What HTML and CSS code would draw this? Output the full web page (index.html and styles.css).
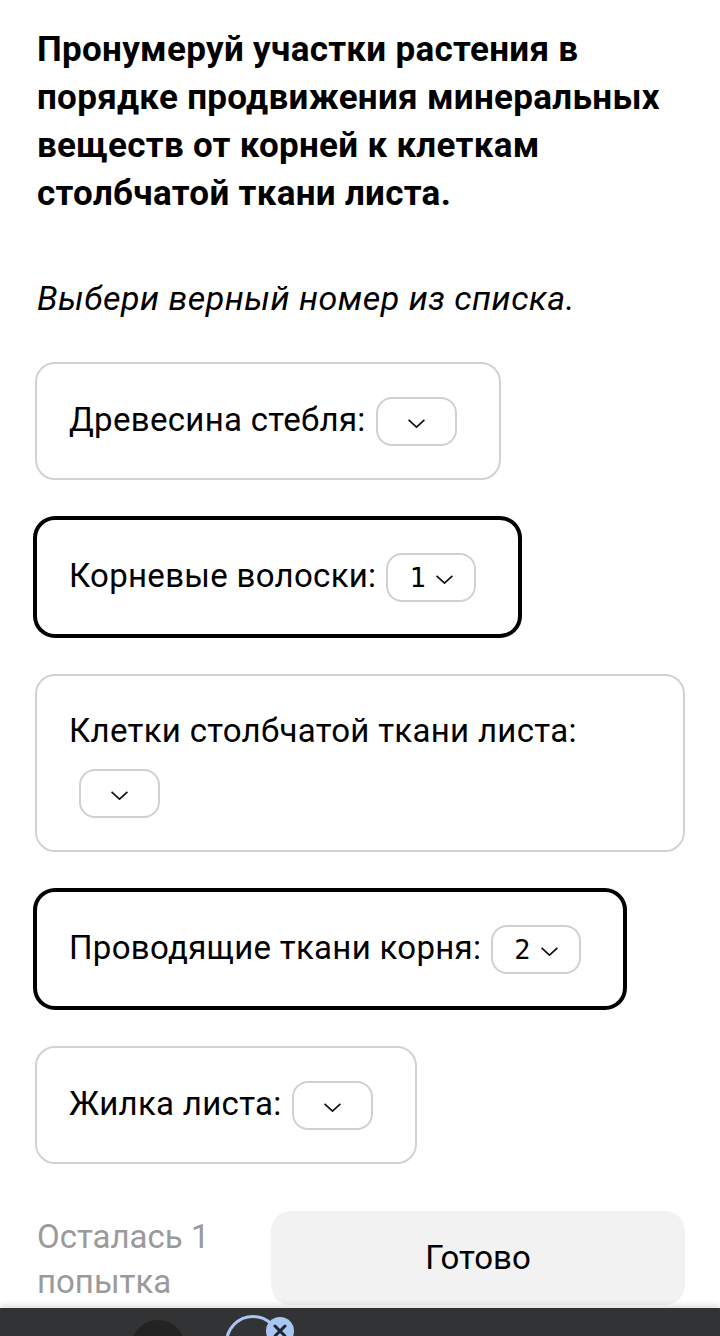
FILE: index.html
```html
<!DOCTYPE html>
<html lang="ru">
<head>
<meta charset="utf-8">
<title>Задание</title>
<link rel="stylesheet" href="styles.css">
</head>
<body>
<main class="page">
  <h1 class="title">Пронумеруй участки растения в порядке продвижения минеральных веществ от корней к клеткам столбчатой ткани листа.</h1>
  <p class="hint">Выбери верный номер из списка.</p>
  <div class="cards">
    <div class="card">
      <span class="label">Древесина стебля:</span>
      <span class="select empty"><svg class="chev" viewBox="0 0 18 10"><path d="M1.5 1.5 L9 8.5 L16.5 1.5"/></svg></span>
    </div>
    <div class="card active">
      <span class="label">Корневые волоски:</span>
      <span class="select"><span class="val">1</span><svg class="chev" viewBox="0 0 18 10"><path d="M1.5 1.5 L9 8.5 L16.5 1.5"/></svg></span>
    </div>
    <div class="card">
      <span class="label">Клетки столбчатой ткани листа:</span>
      <span class="select empty"><svg class="chev" viewBox="0 0 18 10"><path d="M1.5 1.5 L9 8.5 L16.5 1.5"/></svg></span>
    </div>
    <div class="card active">
      <span class="label">Проводящие ткани корня:</span>
      <span class="select"><span class="val">2</span><svg class="chev" viewBox="0 0 18 10"><path d="M1.5 1.5 L9 8.5 L16.5 1.5"/></svg></span>
    </div>
    <div class="card">
      <span class="label">Жилка листа:</span>
      <span class="select empty"><svg class="chev" viewBox="0 0 18 10"><path d="M1.5 1.5 L9 8.5 L16.5 1.5"/></svg></span>
    </div>
  </div>
  <div class="footer">
    <div class="attempts">Осталась 1 попытка</div>
    <button class="done">Готово</button>
  </div>
</main>
<div class="navbar">
  <span class="dot"></span>
  <span class="ring-wrap">
    <span class="ring"></span>
    <svg class="badge" viewBox="0 0 28 28"><circle cx="14" cy="14" r="14" fill="#a9c6f3"/><path d="M9 9 L19 19 M19 9 L9 19" stroke="#1d2330" stroke-width="3" stroke-linecap="round"/></svg>
  </span>
</div>
</body>
</html>
```
FILE: styles.css
```css
* { box-sizing: border-box; }
html, body { margin: 0; padding: 0; background: #fff; }
body {
  font-family: Roboto, "Noto Sans", sans-serif;
  color: #000;
  width: 720px;
  height: 1336px;
  overflow: hidden;
}
.page {
  padding: 26px 35px 0 37px;
}
.title {
  margin: 0;
  font-size: 35px;
  line-height: 48px;
  font-weight: 700;
  letter-spacing: 0.3px;
  padding-right: 0;
}
.hint {
  margin: 56px 0 0;
  font-size: 34px;
  line-height: 48px;
  font-style: italic;
  letter-spacing: 0.5px;
}
.cards {
  margin: 40px 0 0 -2px;
  display: flex;
  flex-direction: column;
  align-items: flex-start;
  gap: 38px;
}
.card {
  display: flex;
  flex-wrap: wrap;
  align-items: center;
  row-gap: 12px;
  max-width: 100%;
  border: 2px solid #d2d2d2;
  border-radius: 20px;
  padding: 33px 32px 32px 32px;
  background: #fff;
}
.card.active {
  border-color: #000;
  box-shadow: 0 0 0 2px #000;
}
.label {
  font-size: 33px;
  line-height: 48px;
  letter-spacing: 0.3px;
  position: relative;
  top: -2px;
}
.select {
  display: inline-flex;
  align-items: center;
  height: 49px;
  margin: 0 10px;
  padding: 0 20px 0 21px;
  border: 2px solid #d0d0d0;
  border-radius: 16px;
  gap: 9px;
}
.select.empty { padding: 0 29px 0 29px; }
.val {
  font-family: "DejaVu Sans Mono", "Liberation Mono", monospace;
  font-size: 27px;
  line-height: 30px;
}
.chev {
  width: 19px;
  height: 11px;
  margin-top: 4px;
  fill: none;
  stroke: #111;
  stroke-width: 1.6;
}
.footer {
  margin: 47px 0 0 0;
  display: flex;
  align-items: flex-start;
  gap: 34px;
}
.attempts {
  width: 200px;
  font-size: 33px;
  line-height: 45px;
  color: #9a9a9a;
  padding-top: 3px;
}
.done {
  flex: 1;
  height: 94px;
  border: none;
  border-radius: 20px;
  background: #f2f2f2;
  font-family: Roboto, "Noto Sans", sans-serif;
  font-size: 33px;
  color: #000;
  padding: 0 0 2px;
}
.navbar {
  position: fixed;
  left: 0;
  right: 0;
  bottom: 0;
  height: 28px;
  background: #323334;
  box-shadow: 0 -3px 6px rgba(0,0,0,0.12);
  overflow: hidden;
  display: flex;
  align-items: flex-start;
  padding-left: 131px;
  gap: 40px;
}
.dot {
  margin-top: 12px;
  width: 54px;
  height: 54px;
  border-radius: 50%;
  background: #232323;
}
.ring-wrap {
  position: relative;
  margin-top: 7px;
  width: 72px;
  height: 60px;
}
.ring {
  position: absolute;
  left: 0;
  top: 0;
  width: 56px;
  height: 56px;
  border-radius: 50%;
  border: 3px solid #a9c6f3;
}
.badge {
  position: absolute;
  left: 41px;
  top: 2px;
  width: 28px;
  height: 28px;
}
```
